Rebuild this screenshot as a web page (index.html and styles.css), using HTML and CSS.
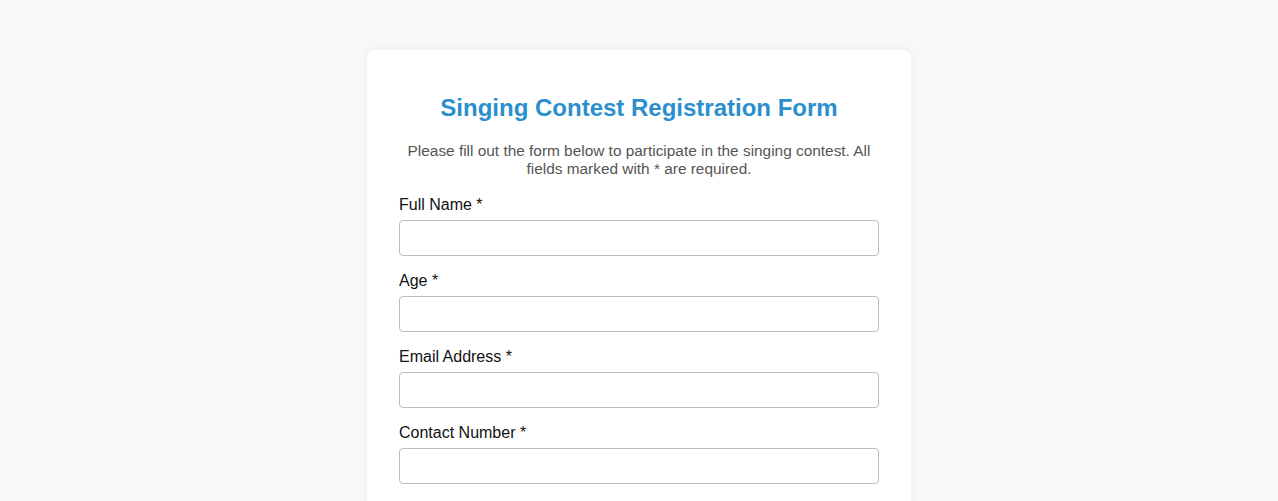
FILE: index.html
```html
<!DOCTYPE html>
<html lang="en">
<head>
<meta charset="utf-8">
<title>Singing Contest Registration Form</title>
<link rel="stylesheet" href="styles.css">
</head>
<body>
<div class="card">
  <h2 class="title">Singing Contest Registration Form</h2>
  <p class="intro">Please fill out the form below to participate in the singing contest. All fields marked with * are required.</p>
  <form class="form">
    <div class="group">
      <label class="label" for="name">Full Name *</label>
      <input class="input" type="text" id="name">
    </div>
    <div class="group">
      <label class="label" for="age">Age *</label>
      <input class="input" type="number" id="age">
    </div>
    <div class="group">
      <label class="label" for="email">Email Address *</label>
      <input class="input" type="email" id="email">
    </div>
    <div class="group">
      <label class="label" for="phone">Contact Number *</label>
      <input class="input" type="tel" id="phone">
    </div>
  </form>
</div>
</body>
</html>
```
FILE: styles.css
```css
html, body {
  margin: 0;
  padding: 0;
}
body {
  background: #f8f8f8;
  font-family: "Liberation Sans", Arial, sans-serif;
  color: #222;
  padding-top: 50px;
}
.card {
  width: 480px;
  margin: 0 auto;
  background: #fff;
  padding: 32px;
  border-radius: 8px;
  box-shadow: 0 0 10px rgba(0,0,0,0.06);
}
.title {
  margin: 12px 0 0;
  text-align: center;
  color: #2a8fcc;
  font-size: 24px;
  font-weight: bold;
  line-height: 28px;
}
.intro {
  margin: 20px 0 18px;
  text-align: center;
  color: #555;
  font-size: 15.4px;
  line-height: 18px;
}
.group {
  margin-bottom: 16px;
}
.label {
  display: block;
  font-size: 16px;
  line-height: 18px;
  color: #111;
  margin-bottom: 6px;
}
.input {
  display: block;
  box-sizing: border-box;
  width: 100%;
  height: 36px;
  border: 1px solid #bbb;
  border-radius: 4px;
  background: #fff;
  font-family: inherit;
  font-size: 16px;
  padding: 8px;
}
```
